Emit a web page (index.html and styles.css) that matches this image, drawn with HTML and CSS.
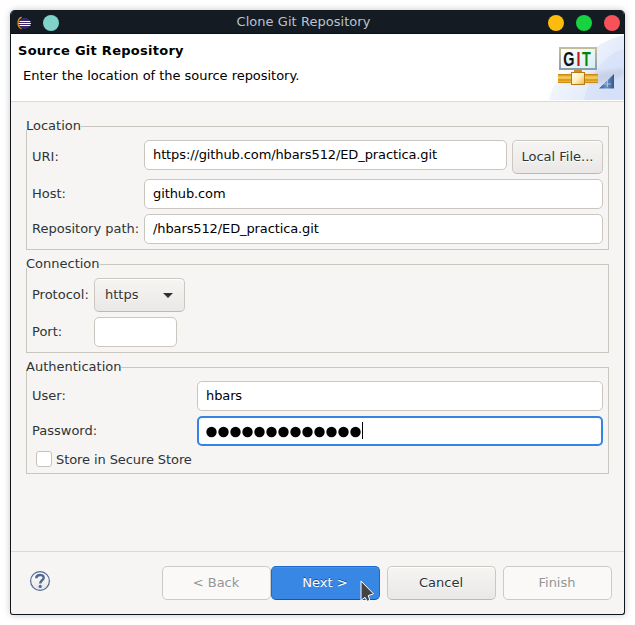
FILE: index.html
```html
<!DOCTYPE html>
<html lang="en">
<head>
<meta charset="utf-8">
<title>Clone Git Repository</title>
<link rel="stylesheet" href="styles.css">
</head>
<body>
<main class="window">
  <header class="titlebar">
    <svg class="eclipse" width="14" height="14" viewBox="0 0 14 14">
      <path d="M4.600 1.200C-.2 3.500-.2 10.700 4.600 13" fill="none" stroke="#e08a1b" stroke-width="1.300"/>
      <circle cx="7.800" cy="7.300" r="5.600" fill="#382b68"/>
      <path d="M2.400 5.500h11M1.600 7.500h12.300M2.400 9.500h11" stroke="#fff" stroke-width="1"/>
    </svg>
    <span class="dot teal"></span>
    <h1 class="title">Clone Git Repository</h1>
    <span class="dot yellow"></span>
    <span class="dot green"></span>
    <span class="dot red"></span>
  </header>
  <section class="banner">
    <div class="banner-text">
      <h2>Source Git Repository</h2>
      <p>Enter the location of the source repository.</p>
    </div>
    <svg class="banner-art" width="75" height="66" viewBox="0 0 75 66">
      <defs>
        <linearGradient id="sky" x1="0" y1="0" x2="1" y2=".6"><stop offset="0" stop-color="#fff"/><stop offset="1" stop-color="#c9d8f6"/></linearGradient>
        <linearGradient id="pipe" x1="0" y1="0" x2="0" y2="1"><stop offset="0" stop-color="#bd7d0b"/><stop offset=".2" stop-color="#e9ae2c"/><stop offset=".45" stop-color="#f5d569"/><stop offset=".65" stop-color="#d4900f"/><stop offset=".85" stop-color="#eeb535"/><stop offset="1" stop-color="#b97708"/></linearGradient>
        <linearGradient id="joint" x1="0" y1="0" x2="1" y2="1"><stop offset="0" stop-color="#fff"/><stop offset=".5" stop-color="#fdf1bd"/><stop offset="1" stop-color="#e8b647"/></linearGradient>
        <linearGradient id="plate" x1="0" y1="0" x2="1" y2="1"><stop offset="0" stop-color="#fff"/><stop offset="1" stop-color="#d5edf4"/></linearGradient>
        <linearGradient id="frame" x1="0" y1="0" x2="0" y2="1"><stop offset="0" stop-color="#c6bd96"/><stop offset="1" stop-color="#8d9cb0"/></linearGradient>
        <linearGradient id="fin" x1="0" y1="0" x2="1" y2="0"><stop offset="0" stop-color="#365a95"/><stop offset=".5" stop-color="#6d91c1"/><stop offset="1" stop-color="#355791"/></linearGradient>
        <filter id="soft"><feGaussianBlur stdDeviation="2"/></filter>
      </defs>
      <path d="M75 1C53 6 38 17 30 35C14 38 3 50 0 66H75Z" fill="url(#sky)" opacity=".65"/>
      <path d="M75 15C56 20 41 39 35 66H75Z" fill="#c9d8f6" opacity=".35"/>
      <path d="M49 38L75 35V41L52 49H10Z" fill="#9ba5b5" opacity=".28" filter="url(#soft)"/>
      <rect x="11" y="14" width="36" height="21" fill="url(#plate)" stroke="url(#frame)" stroke-width="2"/>
      <text class="git" transform="translate(14.200 31.500) scale(.72 1)"><tspan>G</tspan><tspan class="git-i" dx="3">I</tspan><tspan class="git-t" dx="2">T</tspan></text>
      <rect x="25" y="36" width="8" height="3" fill="#c99124"/>
      <rect x="9" y="40" width="40" height="9" fill="url(#pipe)"/>
      <rect x="22.500" y="38.500" width="13" height="12" fill="url(#joint)" stroke="#b67b17"/>
      <path d="M50 54.500L65 40V54.500Z" fill="url(#fin)"/>
      <path d="M58.500 46v7M55 50h7" stroke="#c3d7ee" stroke-width=".7"/>
    </svg>
  </section>
  <form class="content">
    <fieldset class="group location">
      <legend>Location</legend>
      <label for="uri">URI:</label>
      <div class="uri-row">
        <input id="uri" class="field" type="text" value="https://github.com/hbars512/ED_practica.git">
        <button class="btn local" type="button">Local File...</button>
      </div>
      <label for="host">Host:</label>
      <input id="host" class="field" type="text" value="github.com">
      <label for="path">Repository path:</label>
      <input id="path" class="field" type="text" value="/hbars512/ED_practica.git">
    </fieldset>
    <fieldset class="group connection">
      <legend>Connection</legend>
      <label>Protocol:</label>
      <button class="btn combo" type="button">https
        <svg width="10" height="5" viewBox="0 0 10 5"><path d="M0 0h10L5 5Z" fill="#2e3436"/></svg>
      </button>
      <label for="port">Port:</label>
      <input id="port" class="field port" type="text">
    </fieldset>
    <fieldset class="group auth">
      <legend>Authentication</legend>
      <label for="user">User:</label>
      <input id="user" class="field" type="text" value="hbars">
      <label>Password:</label>
      <div class="field focused">
        <svg width="157" height="18" viewBox="0 0 157 18">
          <defs><pattern id="bullets" width="12" height="18" patternUnits="userSpaceOnUse"><circle cx="5.500" cy="10" r="5.200"/></pattern></defs>
          <rect width="156" height="18" fill="url(#bullets)"/>
          <rect x="156" y="0" width="1" height="17"/>
        </svg>
      </div>
      <div class="check-row"><span class="check"></span><span class="check-label">Store in Secure Store</span></div>
    </fieldset>
  </form>
  <footer class="actions">
    <svg class="help" width="22" height="22" viewBox="0 0 22 22">
      <defs><linearGradient id="hg" x1="0" y1="0" x2="0" y2="1"><stop offset="0" stop-color="#fff"/><stop offset="1" stop-color="#e4e4e6"/></linearGradient></defs>
      <circle cx="11" cy="11" r="9.400" fill="url(#hg)" stroke="#536992" stroke-width="1.200"/>
      <path d="M7.300 8.200C7.300 3.900 14.700 3.900 14.700 7.700C14.700 10.300 11.200 10.300 11.200 13.500" fill="none" stroke="#536992" stroke-width="2.500"/>
      <circle cx="11.200" cy="16.400" r="1.600" fill="#536992"/>
    </svg>
    <button class="btn action disabled" type="button">&lt; Back</button>
    <button class="btn action primary" type="button">Next &gt;
      <svg class="cursor" width="16" height="24" viewBox="0 0 16 24"><path d="M1 1V20.300L5 17.300L7.200 21.300L9.800 20.300L8.300 15.600L13.500 13.800Z" fill="#444" stroke="#fff" stroke-width="1"/></svg>
    </button>
    <button class="btn action cancel" type="button">Cancel</button>
    <button class="btn action disabled finish" type="button">Finish</button>
  </footer>
</main>
</body>
</html>
```
FILE: styles.css
```css
* { box-sizing: border-box; }
body {
  margin: 0;
  padding: 10px;
  background: #fff;
  color: #2e3436;
  font: 13px/16px "DejaVu Sans", sans-serif;
}
.window {
  display: flex;
  flex-direction: column;
  width: 615px;
  height: 605px;
  border: 1px solid #10161d;
  border-top: 0;
  border-radius: 5px 5px 3px 3px;
  background: #f6f5f4;
  box-shadow: 0 0 7px rgba(0, 0, 0, .22);
  overflow: hidden;
}
.titlebar {
  display: flex;
  align-items: center;
  flex: none;
  height: 24px;
  padding: 2px 4px 0 6px;
  background: #141b22;
  border-bottom: 1px solid #100c1c;
}
.eclipse { margin-right: 12px; }
.dot { width: 16px; height: 16px; border-radius: 50%; }
.teal { background: #7fd3ca; }
.yellow { background: #fdbc0b; }
.green { background: #17d33f; margin: 0 12px; }
.red { background: #f75159; }
.title {
  flex: 1;
  margin: 0;
  padding: 0 0 2px 0;
  color: #b9c3cf;
  font-size: 13px;
  font-weight: normal;
  letter-spacing: .04px;
  text-align: center;
}
.banner {
  display: flex;
  justify-content: space-between;
  flex: none;
  height: 68px;
  background: #fff;
  border-bottom: 1px solid #d9d9d8;
  color: #000;
}
.banner-text { padding: 9px 0 0 7px; }
.banner h2 { margin: 0 0 9px; font-size: 13px; line-height: 16px; letter-spacing: .27px; }
.banner p { margin: 0 0 0 5px; letter-spacing: -.03px; }
.git { font: bold 20px "Liberation Sans", sans-serif; fill: #111; }
.git-i { fill: #c4141b; }
.git-t { fill: #078407; }
.content {
  display: flex;
  flex-direction: column;
  gap: 10px;
  flex: 1;
  padding: 20px 15px 0;
}
.group {
  display: grid;
  gap: 5px;
  min-width: 0;
  margin: 0;
  padding: 10px 5px 5px;
  border: 1px solid #c9c5bf;
}
.group legend {
  height: 8px;
  margin-left: -6px;
  padding: 0;
  line-height: 8px;
}
.group label { align-self: center; white-space: nowrap; }
.location { grid-template-columns: 107px 1fr; }
.connection { grid-template-columns: 57px 1fr; }
.auth { grid-template-columns: 160px 1fr; }
.field {
  display: block;
  width: 100%;
  min-width: 0;
  height: 30px;
  padding: 0 8px 2px;
  border: 1px solid #c9c5bf;
  border-radius: 5px;
  background: #fff;
  color: #000;
  font: inherit;
  letter-spacing: -.11px;
  outline: 0;
}
.focused { border: 2px solid #3584e4; padding: 4px 7px; }
.focused svg { display: block; }
.port { width: 83px; }
.uri-row { display: flex; gap: 5px; min-width: 0; }
.uri-row .field { flex: 1; }
.btn {
  height: 34px;
  padding: 0;
  border: 1px solid #cdc7c2;
  border-bottom-color: #bfb8b1;
  border-radius: 5px;
  background: linear-gradient(#f6f5f4, #eae8e6);
  box-shadow: inset 0 1px #fff;
  color: #2e3436;
  font: inherit;
  text-shadow: 0 1px #fff;
}
.local { width: 91px; }
.combo {
  display: flex;
  align-items: center;
  justify-content: space-between;
  width: 91px;
  padding: 0 11px 0 10px;
}
.check-row {
  display: flex;
  grid-column: 1 / -1;
  align-items: flex-start;
  gap: 4px;
  height: 17px;
  padding-left: 4px;
}
.check {
  width: 16px;
  height: 16px;
  border: 1px solid #c9c1ba;
  border-radius: 3px;
  background: #fff;
}
.check-label { padding-top: 1px; letter-spacing: -.09px; }
.actions {
  display: flex;
  align-items: center;
  flex: none;
  height: 63px;
  padding: 0 12px 0 18px;
  border-top: 1px solid #d9d9d8;
}
.help { margin: 0 auto 4px 0; }
.action { width: 109px; padding-right: 1px; }
.cancel, .finish { margin-left: 7px; }
.disabled {
  background: #faf9f8;
  border-color: #cdcac6;
  box-shadow: none;
  color: #929595;
}
.primary {
  position: relative;
  background: #3987e5;
  border-color: #1b6acb;
  border-bottom-color: #1558ab;
  box-shadow: inset 0 1px #4b93e8;
  color: #fff;
  text-shadow: 0 -1px rgba(0, 0, 0, .45);
}
.cursor { position: absolute; left: 88px; top: 13px; }
```
